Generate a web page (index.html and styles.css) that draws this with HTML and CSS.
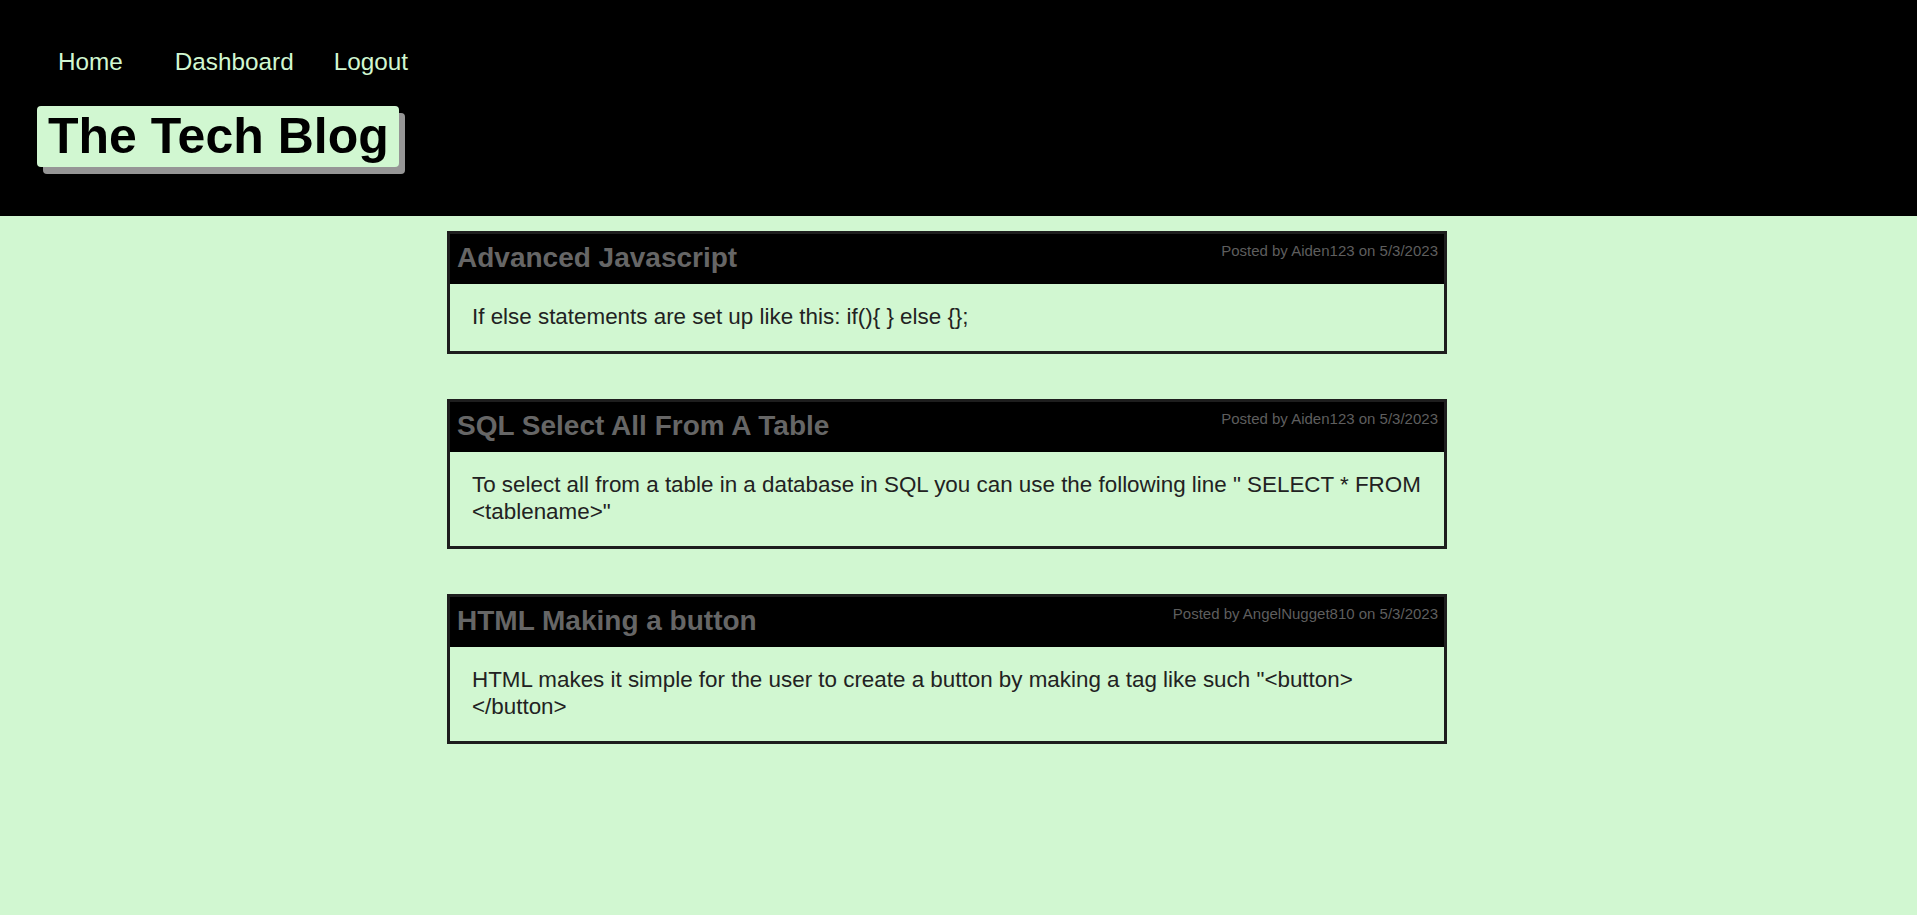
FILE: index.html
```html
<!DOCTYPE html>
<html lang="en">
<head>
<meta charset="utf-8">
<title>The Tech Blog</title>
<link rel="stylesheet" href="styles.css">
</head>
<body>
<header class="site-header">
  <nav class="nav">
    <a class="nav-link nav-home" href="#">Home</a>
    <a class="nav-link" href="#">Dashboard</a>
    <a class="nav-link" href="#">Logout</a>
  </nav>
  <h1 class="brand">The Tech Blog</h1>
</header>
<main class="posts">
  <article class="post">
    <div class="post-head">
      <h2 class="post-title">Advanced Javascript</h2>
      <span class="post-meta">Posted by Aiden123 on 5/3/2023</span>
    </div>
    <div class="post-body">If else statements are set up like this: if(){ } else {};</div>
  </article>
  <article class="post">
    <div class="post-head">
      <h2 class="post-title">SQL Select All From A Table</h2>
      <span class="post-meta">Posted by Aiden123 on 5/3/2023</span>
    </div>
    <div class="post-body">To select all from a table in a database in SQL you can use the following line " SELECT * FROM &lt;tablename&gt;"</div>
  </article>
  <article class="post">
    <div class="post-head">
      <h2 class="post-title">HTML Making a button</h2>
      <span class="post-meta">Posted by AngelNugget810 on 5/3/2023</span>
    </div>
    <div class="post-body">HTML makes it simple for the user to create a button by making a tag like such "&lt;button&gt;&lt;/button&gt;</div>
  </article>
</main>
</body>
</html>
```
FILE: styles.css
```css
html, body {
  margin: 0;
  padding: 0;
}
body {
  background: #d1f7d1;
  font-family: "Liberation Sans", Arial, sans-serif;
  min-height: 100vh;
}
.site-header {
  background: #000;
  height: 216px;
  box-sizing: border-box;
  padding: 48px 0 0 37px;
}
.nav {
  display: flex;
  padding-left: 21px;
  gap: 40px;
}
.nav-link {
  color: #d1f7d1;
  text-decoration: none;
  font-size: 24.3px;
  line-height: 28px;
}
.nav-home {
  margin-right: 12px;
}
.brand {
  display: inline-block;
  margin: 30px 0 0 0;
  background: #d1f7d1;
  color: #000;
  font-size: 50px;
  font-weight: bold;
  line-height: 56px;
  padding: 2px 10px 3px 11px;
  border-radius: 4px;
  box-shadow: 6px 7px 0 #969696;
}
.posts {
  width: 1000px;
  margin: 15px 0 0 447px;
  display: flex;
  flex-direction: column;
  gap: 45px;
}
.post {
  border: 3px solid #1e1e1e;
}
.post-head {
  background: #000;
  height: 50px;
  box-sizing: border-box;
  padding: 8px 6px 0 7px;
  display: flex;
  justify-content: space-between;
  align-items: flex-start;
}
.post-title {
  margin: 0;
  font-size: 28px;
  line-height: 31px;
  font-weight: bold;
  color: #666;
}
.post-meta {
  font-size: 15px;
  line-height: 17px;
  color: #5e5e5e;
}
.post-body {
  padding: 20px 18px 21px 22px;
  font-size: 22.4px;
  line-height: 26.4px;
  color: #222;
}
```
